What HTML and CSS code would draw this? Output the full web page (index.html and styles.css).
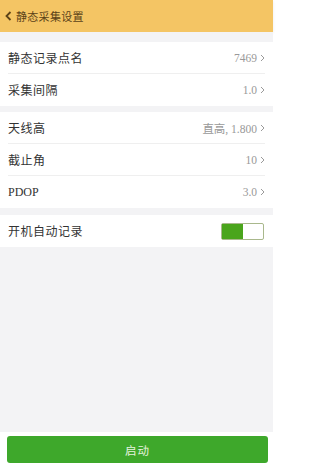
FILE: index.html
```html
<!DOCTYPE html>
<html lang="zh">
<head>
<meta charset="utf-8">
<meta name="viewport" content="width=273">
<link rel="stylesheet" href="styles.css">
</head>
<body>
<div class="page">
  <header class="topbar">
    <svg class="back" width="7" height="10" viewBox="0 0 7 10"><polyline points="5.5,1 1.5,5 5.5,9" fill="none" stroke="#5b4218" stroke-width="1.8"/></svg>
    <span class="title">静态采集设置</span>
  </header>
  <main class="content">
    <section class="group">
      <div class="row"><span class="label">静态记录点名</span><span class="value">7469<svg class="chev" width="5" height="8" viewBox="0 0 5 8"><polyline points="1,1 4,4 1,7" fill="none" stroke="#9a9a9a" stroke-width="1"/></svg></span></div>
      <div class="row"><span class="label">采集间隔</span><span class="value">1.0<svg class="chev" width="5" height="8" viewBox="0 0 5 8"><polyline points="1,1 4,4 1,7" fill="none" stroke="#9a9a9a" stroke-width="1"/></svg></span></div>
    </section>
    <section class="group">
      <div class="row"><span class="label">天线高</span><span class="value">直高, 1.800<svg class="chev" width="5" height="8" viewBox="0 0 5 8"><polyline points="1,1 4,4 1,7" fill="none" stroke="#9a9a9a" stroke-width="1"/></svg></span></div>
      <div class="row"><span class="label">截止角</span><span class="value">10<svg class="chev" width="5" height="8" viewBox="0 0 5 8"><polyline points="1,1 4,4 1,7" fill="none" stroke="#9a9a9a" stroke-width="1"/></svg></span></div>
      <div class="row"><span class="label latin">PDOP</span><span class="value">3.0<svg class="chev" width="5" height="8" viewBox="0 0 5 8"><polyline points="1,1 4,4 1,7" fill="none" stroke="#9a9a9a" stroke-width="1"/></svg></span></div>
    </section>
    <section class="group group-last">
      <div class="row"><span class="label">开机自动记录</span><span class="toggle"><span class="toggle-on"></span></span></div>
    </section>
  </main>
  <footer class="footer">
    <button class="start">启动</button>
  </footer>
</div>
</body>
</html>
```

FILE: styles.css
```css
html, body {
  margin: 0;
  padding: 0;
}
body {
  font-family: "Liberation Serif", "Noto Sans CJK SC", serif;
  background: #ffffff;
}
.page {
  display: flex;
  flex-direction: column;
  width: 273px;
  height: 467px;
}
.topbar {
  height: 32px;
  background: #f4c564;
  display: flex;
  align-items: center;
  gap: 4px;
  padding-left: 5px;
  box-shadow: 0 1px 3px rgba(0,0,0,0.08);
}
.back {
  display: block;
}
.title {
  font-size: 11px;
  color: #5b4218;
  letter-spacing: 0.3px;
}
.content {
  flex: 1;
  background: #f3f3f5;
  padding-top: 10px;
  display: flex;
  flex-direction: column;
  gap: 6px;
}
.group {
  background: #ffffff;
  padding: 0 8px;
}
.group-last {
  margin-top: 1px;
}
.row {
  height: 32px;
  display: flex;
  align-items: center;
  justify-content: space-between;
  border-bottom: 1px solid #efefef;
  box-sizing: border-box;
}
.row:last-child {
  border-bottom: none;
}
.label {
  font-size: 12px;
  color: #333333;
  letter-spacing: 0.5px;
}
.latin {
  letter-spacing: 0;
}
.value {
  font-size: 11.5px;
  color: #999999;
  display: flex;
  align-items: center;
  gap: 3px;
}
.chev {
  display: block;
}
.toggle {
  width: 43px;
  height: 17px;
  box-sizing: border-box;
  border: 1px solid #a9b88c;
  border-radius: 2px;
  background: #ffffff;
  display: flex;
  margin-right: 1px;
}
.toggle-on {
  width: 21px;
  background: #4aa51c;
}
.footer {
  height: 35px;
  background: #ffffff;
  padding: 4px 5px 0 7px;
  box-sizing: border-box;
}
.start {
  width: 100%;
  height: 27px;
  border: none;
  border-radius: 3px;
  background: #3ea82b;
  color: #e6f3df;
  font-family: "Noto Sans CJK SC", sans-serif;
  font-size: 11.5px;
  letter-spacing: 1px;
}
```
